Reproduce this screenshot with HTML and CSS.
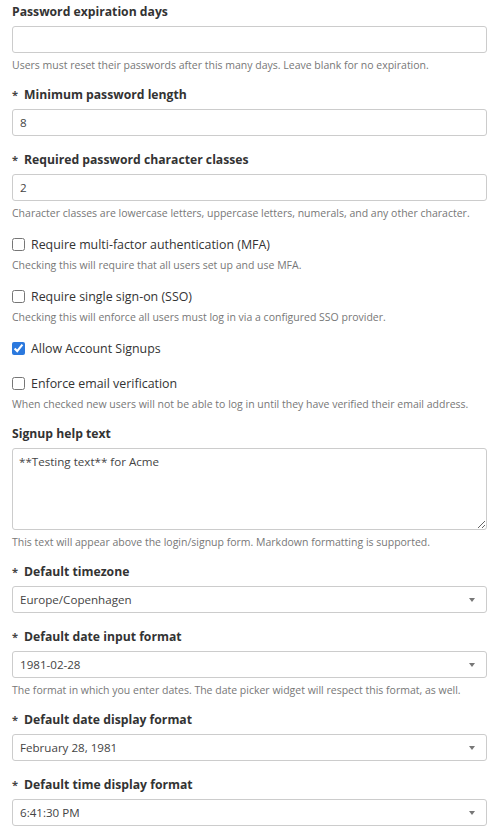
FILE: index.html
```html
<!DOCTYPE html>
<html lang="en">
<head>
<meta charset="utf-8">
<title>Settings</title>
<link rel="stylesheet" href="styles.css">
</head>
<body>
<form class="form">
  <div class="group">
    <label class="label">Password expiration days</label>
    <input class="control" type="text" value="">
    <div class="help">Users must reset their passwords after this many days. Leave blank for no expiration.</div>
  </div>
  <div class="group">
    <label class="label"><span class="req">*</span>Minimum password length</label>
    <input class="control" type="text" value="8">
  </div>
  <div class="group">
    <label class="label"><span class="req">*</span>Required password character classes</label>
    <input class="control" type="text" value="2">
    <div class="help">Character classes are lowercase letters, uppercase letters, numerals, and any other character.</div>
  </div>
  <div class="group">
    <label class="check"><input type="checkbox"><span>Require multi-factor authentication (MFA)</span></label>
    <div class="help help-check">Checking this will require that all users set up and use MFA.</div>
  </div>
  <div class="group">
    <label class="check"><input type="checkbox"><span>Require single sign-on (SSO)</span></label>
    <div class="help help-check">Checking this will enforce all users must log in via a configured SSO provider.</div>
  </div>
  <div class="group">
    <label class="check"><input type="checkbox" checked><span>Allow Account Signups</span></label>
  </div>
  <div class="group">
    <label class="check"><input type="checkbox"><span>Enforce email verification</span></label>
    <div class="help help-check">When checked new users will not be able to log in until they have verified their email address.</div>
  </div>
  <div class="group">
    <label class="label">Signup help text</label>
    <textarea class="control area">**Testing text** for Acme</textarea>
    <div class="help">This text will appear above the login/signup form. Markdown formatting is supported.</div>
  </div>
  <div class="group">
    <label class="label"><span class="req">*</span>Default timezone</label>
    <div class="select"><span>Europe/Copenhagen</span><i class="caret"></i></div>
  </div>
  <div class="group">
    <label class="label"><span class="req">*</span>Default date input format</label>
    <div class="select"><span>1981-02-28</span><i class="caret"></i></div>
    <div class="help">The format in which you enter dates. The date picker widget will respect this format, as well.</div>
  </div>
  <div class="group">
    <label class="label"><span class="req">*</span>Default date display format</label>
    <div class="select"><span>February 28, 1981</span><i class="caret"></i></div>
  </div>
  <div class="group">
    <label class="label"><span class="req">*</span>Default time display format</label>
    <div class="select"><span>6:41:30 PM</span><i class="caret"></i></div>
  </div>
</form>
</body>
</html>
```
FILE: styles.css
```css
* { box-sizing: border-box; }
html, body { margin: 0; padding: 0; background: #fff; }
body {
  font-family: "Open Sans", "Noto Sans", sans-serif;
  color: #333;
  font-size: 12px;
}
.form {
  padding: 3px 10px 0 12px;
  display: flex;
  flex-direction: column;
}
.group {
  display: flex;
  flex-direction: column;
  margin-bottom: 15px;
}
.label {
  display: block;
  font-weight: 700;
  font-size: 12.2px;
  line-height: 18px;
  color: #333;
  margin-bottom: 5px;
}
.req {
  font-size: 11px;
  color: #444;
  margin-right: 6px;
}
.control {
  display: block;
  width: 100%;
  height: 27px;
  border: 1px solid #ccc;
  border-radius: 3px;
  padding: 0 7px;
  font-family: inherit;
  font-size: 11.6px;
  color: #444;
  background: #fff;
  outline: none;
}
.area {
  height: 82px;
  padding: 4px 6px;
  line-height: 18px;
  resize: vertical;
}
.help {
  font-size: 10.5px;
  line-height: 16px;
  color: #777;
  margin-top: 4px;
  margin-bottom: -2px;
}
.help-check { margin-top: 3px; }
.check {
  display: flex;
  align-items: center;
  gap: 6px;
  height: 20px;
  font-size: 12.4px;
  color: #333;
}
.check input {
  margin: 0;
  width: 13px;
  height: 13px;
  accent-color: #2b79de;
}
.select {
  display: flex;
  align-items: center;
  justify-content: space-between;
  height: 27px;
  border: 1px solid #ccc;
  border-radius: 3px;
  padding: 0 11px 0 7px;
  font-size: 11.6px;
  color: #444;
}
.caret {
  width: 0;
  height: 0;
  border-left: 3px solid transparent;
  border-right: 3px solid transparent;
  border-top: 4px solid #777;
}
```
